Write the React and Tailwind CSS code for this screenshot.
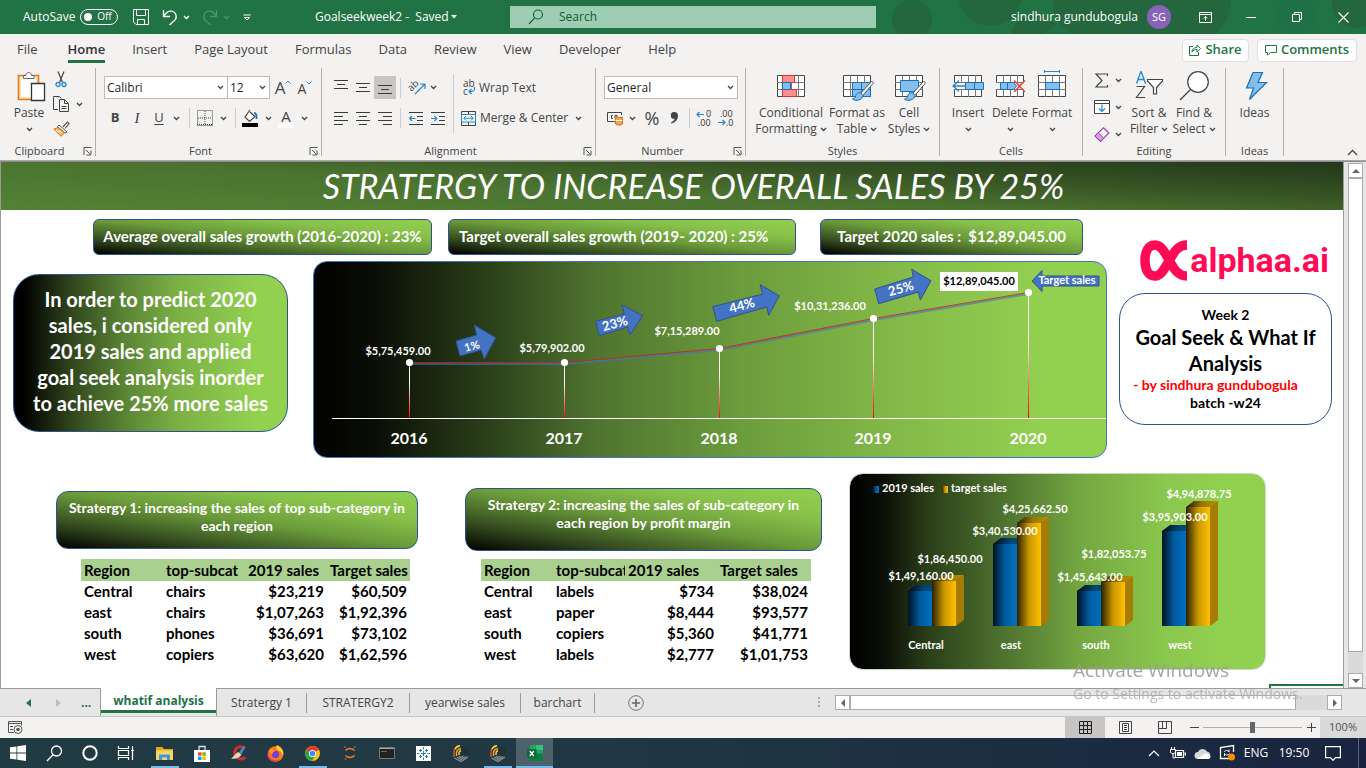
import React from "react";

const UI = "font-['Open_Sans',sans-serif]";
const DOC = "font-['Lato',sans-serif]";

/* ---------- shared pieces ---------- */

function Svg({ w, h, children, className = "" }) {
  return (
    <svg width={w} height={h} viewBox={`0 0 ${w} ${h}`} fill="none" className={`block shrink-0 overflow-visible ${className}`} aria-hidden="true">
      {children}
    </svg>
  );
}

function Chevron({ className = "text-[#444]" }) {
  return (
    <Svg w={7} h={5} className={className}>
      <path d="M1 1l2.5 2.5L6 1" stroke="currentColor" strokeWidth="1.3" />
    </Svg>
  );
}

function Btn({ label, className = "", children }) {
  return (
    <button type="button" aria-label={label} className={`flex shrink-0 items-center justify-center ${className}`}>
      {children}
    </button>
  );
}

function Drop({ label, className = "" }) {
  return (
    <Btn label={label} className={`h-5 w-3 ${className}`}>
      <Chevron />
    </Btn>
  );
}

function Divider({ className = "" }) {
  return <span className={`w-px shrink-0 bg-[#cfcdcb] ${className}`} />;
}

function Combo({ label, options, className }) {
  return (
    <div className={`relative flex h-[23px] items-center border border-[#bebbb8] bg-white ${className}`}>
      <select aria-label={label} className="h-[18px] w-full appearance-none bg-transparent pl-[2px] text-xs leading-[18px] text-[#262626] outline-none">
        {options.map((o) => (
          <option key={o}>{o}</option>
        ))}
      </select>
      <span className="pointer-events-none absolute top-2 right-[3px]">
        <Chevron />
      </span>
    </div>
  );
}

function Group({ name, launcher, className, inner = "", children }) {
  return (
    <section aria-label={name} className="flex shrink-0">
      <div className={`flex flex-col ${className}`}>
        <div className={`h-[77px] ${inner}`}>{children}</div>
        <div className="flex h-[18px] items-center">
          <span className="flex-1 text-center text-[11px] text-[#444]">{name}</span>
          {launcher && (
            <Btn label={`${name} settings`} className="h-4 w-4">
              <Svg w={9} h={9}>
                <path d="M1 8V.5h7.500M3 3l4 4M8 3.500V8H3.500" stroke="#555" />
              </Svg>
            </Btn>
          )}
        </div>
      </div>
      <span className="mt-[2px] h-[88px] w-px bg-[#b3b0ad]" />
    </section>
  );
}

/* ---------- title bar ---------- */

function TitleBar() {
  return (
    <header className="relative flex h-[34px] shrink-0 items-center overflow-hidden bg-[#217346] text-xs text-white">
      <svg className="absolute top-0 right-0 h-[34px] w-[480px]" viewBox="0 0 480 34" aria-hidden="true">
        <g fill="#24673f">
          <circle cx="26" cy="19" r="20" />
          <circle cx="104" cy="-6" r="32" />
          <circle cx="150" cy="40" r="26" />
          <circle cx="205" cy="4" r="38" />
          <circle cx="262" cy="24" r="46" />
          <circle cx="305" cy="2" r="40" />
          <circle cx="470" cy="4" r="24" />
        </g>
        <g fill="#1f7044">
          <circle cx="172" cy="42" r="16" />
          <circle cx="410" cy="14" r="20" />
        </g>
      </svg>
      <div className="relative flex w-[510px] shrink-0 items-center pl-[23px]">
        <span className="w-[57px]">AutoSave</span>
        <button type="button" role="switch" aria-checked="false" aria-label="AutoSave" className="flex h-4 w-[38px] items-center rounded-full border border-white pl-[3px]">
          <span className="h-2 w-2 rounded-full bg-white" />
          <span className="flex-1 text-center text-[10px]">Off</span>
        </button>
        <Btn label="Save" className="ml-[15px]">
          <Svg w={16} h={17}>
            <path d="M.5.500h15v15H3l-2.500-2.500zM3.500.500v6h9v-6M4.500 15.500v-5h7v5" stroke="#fff" />
          </Svg>
        </Btn>
        <Btn label="Undo" className="ml-[13px]">
          <Svg w={16} h={17}>
            <path d="M1.500 1v6.500H8M1.800 7.200C4 3.500 7 1.500 10 2.200c4 1 5.500 5.500 3 8.800L7.500 16" stroke="#fff" strokeWidth="1.3" />
          </Svg>
        </Btn>
        <Btn label="Undo history" className="ml-[2px] h-5 w-3">
          <Chevron className="text-white" />
        </Btn>
        <Btn label="Redo" className="ml-[10px]">
          <Svg w={16} h={17}>
            <path d="M14.500 1v6.500H8M14.200 7.200C12 3.500 9 1.500 6 2.200c-4 1-5.500 5.500-3 8.800L8.500 16" stroke="#51936f" strokeWidth="1.3" />
          </Svg>
        </Btn>
        <Btn label="Redo history" className="ml-[2px] h-5 w-3">
          <Chevron className="text-[#51936f]" />
        </Btn>
        <Btn label="Customize toolbar" className="ml-[9px] h-5 w-3">
          <Svg w={8} h={7}>
            <path d="M.5 1h7M1.500 3.500L4 6l2.500-2.500z" stroke="#fff" />
          </Svg>
        </Btn>
        <h1 className="ml-[62px] whitespace-nowrap">Goalseekweek2 - &nbsp;Saved</h1>
        <Btn label="File details" className="-ml-px w-3">
          <Svg w={6} h={4}>
            <path d="M0 0h6L3 3.500z" fill="#fff" />
          </Svg>
        </Btn>
      </div>
      <label className="relative flex h-[22px] w-[366px] items-center bg-[#9fcdb3] pl-[18px]">
        <Svg w={16} h={16}>
          <circle cx="10" cy="5.500" r="4.500" stroke="#0f5b30" strokeWidth="1.1" />
          <path d="M6.800 8.800L1 15" stroke="#0f5b30" strokeWidth="1.1" />
        </Svg>
        <input type="text" aria-label="Search" placeholder="Search" className="ml-[15px] w-full bg-transparent outline-none placeholder:text-[#0f5b30]" />
      </label>
      <div className="relative ml-auto flex items-center">
        <span>sindhura gundubogula</span>
        <Btn label="Account" className="ml-[9px] h-6 w-6 rounded-full bg-[#8764b8] text-[11px]">SG</Btn>
        <Btn label="Ribbon display options" className="ml-[11px] h-[34px] w-[46px]">
          <Svg w={13} h={11}>
            <path d="M.5.500h12v10H.500zM.5 2.500h12M6.500 9V4.500M4.500 6.300l2-2 2 2" stroke="#fff" />
          </Svg>
        </Btn>
        <Btn label="Minimize" className="h-[34px] w-[46px]">
          <Svg w={10} h={1}>
            <path d="M0 .5h10" stroke="#fff" />
          </Svg>
        </Btn>
        <Btn label="Restore" className="h-[34px] w-[46px]">
          <Svg w={10} h={10}>
            <path d="M.5 2.500h7v7h-7zM2.500 2.500v-2h7v7h-2" stroke="#fff" />
          </Svg>
        </Btn>
        <Btn label="Close" className="h-[34px] w-[46px]">
          <Svg w={11} h={11}>
            <path d="M.5.500l10 10M10.500.500l-10 10" stroke="#fff" strokeWidth="1.1" />
          </Svg>
        </Btn>
      </div>
    </header>
  );
}

/* ---------- ribbon ---------- */

const MENU = ["File", "Home", "Insert", "Page Layout", "Formulas", "Data", "Review", "View", "Developer", "Help"];

function MenuBar() {
  return (
    <nav className="flex h-8 shrink-0 items-center pl-[17px] text-[13px] text-[#444]">
      <div className="flex flex-1 gap-[27px]">
        {MENU.map((m) =>
          m === "Home" ? (
            <button key={m} type="button" className="ml-[3px] border-b-[3px] border-[#217346] pt-[3px] pb-px font-semibold text-[#333]">{m}</button>
          ) : (
            <button key={m} type="button">{m}</button>
          )
        )}
      </div>
      <Btn label="Share" className="h-[23px] w-[67px] gap-1 rounded-sm border border-[#e1dfdd] bg-white font-semibold text-[#217346]">
        <Svg w={12} h={12}>
          <path d="M4 2.500H.500v9h9V8M3 8c0-3 2-4.500 5-4.500V1l3.500 3.500L8 8V5.500C6 5.500 4 6 3 8z" stroke="#217346" />
        </Svg>
        Share
      </Btn>
      <Btn label="Comments" className="mr-[9px] ml-2 h-[23px] w-[100px] gap-1 rounded-sm border border-[#e1dfdd] bg-white font-semibold text-[#217346]">
        <Svg w={12} h={11}>
          <path d="M.5.500h11v7H5.500l-3 2.500V7.500h-2z" stroke="#217346" />
        </Svg>
        Comments
      </Btn>
    </nav>
  );
}

function Lines({ rows }) {
  return (
    <Svg w={14} h={15}>
      {rows.map(([x, w, y]) => (
        <path key={y} d={`M${x} ${y + 0.5}h${w}`} stroke="#3b3b3b" />
      ))}
    </Svg>
  );
}

function GridIcon({ children }) {
  return (
    <Svg w={32} h={32}>
      <path d="M2.500 5.500h27v21h-27z" fill="#fff" stroke="#444" />
      <path d="M2 12.500h28M2 19.500h28M9.500 5v22M16.500 5v22M23.500 5v22" stroke="#777" />
      {children}
    </Svg>
  );
}

function Brush() {
  return (
    <>
      <path d="M30.500 11.500L19 24l2.500 2L32 13.500c.5-1-.500-2.500-1.500-2z" fill="#fff" stroke="#555" />
      <path d="M20 23c-3-1-5 1-5.500 3.500-.4 1.600-1.500 2.500-3 2.500 3 2.500 10 1.500 10.500-3.500z" fill="#83beec" stroke="#1a6fb8" />
    </>
  );
}

function Big({ lines, arrow, className, children }) {
  return (
    <button type="button" className={`flex shrink-0 flex-col items-center pt-1 text-xs leading-4 text-[#444] ${className}`}>
      <span className="mb-[3px]">{children}</span>
      <span className="whitespace-nowrap">{lines[0]}</span>
      <span className="flex h-4 items-center gap-[3px] whitespace-nowrap">
        {lines[1]}
        {arrow && <Chevron />}
      </span>
    </button>
  );
}

function ClipboardGroup() {
  return (
    <Group name="Clipboard" launcher className="w-[95px]">
      <div className="flex">
        <Big lines={["Paste"]} arrow className="ml-[9px] w-10">
          <Svg w={32} h={32}>
            <path d="M5.500 5.500h20v24h-20z" fill="#fbe3b6" stroke="#e07b18" strokeWidth="1.600" />
            <path d="M8 8h15v19H8z" fill="#fff" />
            <path d="M10.500 8.500v-3H13c0-4 5.500-4 5.500 0H21v3z" fill="#fff" stroke="#666" />
            <path d="M18.500 13.500h13v17h-13z" fill="#fff" stroke="#333" strokeWidth="1.300" />
          </Svg>
        </Big>
        <div className="flex flex-col gap-[7px] pt-[5px] pl-[3px]">
          <Btn label="Cut" className="h-4 w-[18px]">
            <Svg w={12} h={17}>
              <path d="M3 .5l4.500 11M9 .5L4.500 11.500" stroke="#444" strokeWidth="1.200" />
              <circle cx="3" cy="13.500" r="2" stroke="#2287cf" strokeWidth="1.300" />
              <circle cx="9" cy="13.500" r="2" stroke="#2287cf" strokeWidth="1.300" />
            </Svg>
          </Btn>
          <div className="flex items-center">
            <Btn label="Copy" className="h-4 w-[18px]">
              <Svg w={16} h={16}>
                <path d="M5 13.500H.500V.500h6l2 2M6.500 3.500h5l4 4v8h-9zM11.500 3.500v4h4M8.500 10.500h5M8.500 12.500h5" stroke="#444" />
              </Svg>
            </Btn>
            <Drop label="Copy options" className="ml-[3px] h-4" />
          </div>
          <Btn label="Format painter" className="h-4 w-[18px]">
            <Svg w={17} h={16}>
              <path d="M10 6l4.500-5 1.500 1.500L12 7.500" fill="#fff" stroke="#555" strokeWidth="1.200" />
              <path d="M6 4l8 7-2 1-7.500-6.500z" fill="#fff" stroke="#555" />
              <path d="M5 6.500L.8 8 8 15.300l3.500-3.500z" fill="#f9b263" stroke="#d9720f" />
              <path d="M3 9.500l6 2" stroke="#fff" />
            </Svg>
          </Btn>
        </div>
      </div>
    </Group>
  );
}

function FontGroup() {
  return (
    <Group name="Font" launcher className="w-[225px]" inner="pl-2 pt-[10px]">
      <div className="flex h-[23px] items-center">
        <Combo label="Font" options={["Calibri"]} className="w-[124px]" />
        <Combo label="Font size" options={["12"]} className="-ml-px w-[43px]" />
        <Btn label="Increase font size" className="ml-[3px] h-5 w-5 text-[17px] leading-5 text-[#444]">
          A<Svg w={6} h={4} className="mb-3"><path d="M.5 3.500L3 1l2.500 2.500" stroke="#2287cf" /></Svg>
        </Btn>
        <Btn label="Decrease font size" className="ml-[2px] h-5 w-5 pt-[2px] text-sm leading-5 text-[#444]">
          A<Svg w={6} h={4} className="mb-3"><path d="M.5.500L3 3 5.500.500" stroke="#2287cf" /></Svg>
        </Btn>
      </div>
      <div className="mt-2 flex h-[22px] items-center text-[13px] text-[#444]">
        <Btn label="Bold" className="w-[22px] font-bold">B</Btn>
        <Btn label="Italic" className="w-[22px] font-['Liberation_Serif',serif] text-[15px] italic">I</Btn>
        <Btn label="Underline" className="w-[22px] underline underline-offset-2">U</Btn>
        <Drop label="Underline options" />
        <Divider className="mx-[7px] h-5" />
        <Btn label="Borders">
          <Svg w={16} h={16}>
            <path d="M.5.500h15v15H.500zM8 1v14M1 8h14" stroke="#444" strokeDasharray="1 1" />
            <path d="M0 14.500h16" stroke="#333" strokeWidth="1" strokeDasharray="1 1" />
          </Svg>
        </Btn>
        <Drop label="Border options" className="ml-1" />
        <Divider className="mx-[6px] h-5" />
        <Btn label="Fill color">
          <Svg w={16} h={18}>
            <path d="M8 1L3 8l4.500 4.500L13 7.500 8 3" fill="#fff" stroke="#444" strokeWidth="1.200" />
            <path d="M12 4c2 0 3 2 2.500 6" stroke="#1a6fb8" strokeWidth="1.800" />
            <path d="M0 14h16v4H0z" fill="#000" />
          </Svg>
        </Btn>
        <Drop label="Fill options" className="ml-1" />
        <Btn label="Font color" className="ml-1 w-4 flex-col text-[15px] leading-4">
          A<span className="h-1 w-4 bg-white" />
        </Btn>
        <Drop label="Font color options" className="ml-1" />
      </div>
    </Group>
  );
}

const L = [[0, 14, 1], [0, 9, 5], [0, 14, 9], [0, 9, 13]];
const C = [[0, 14, 1], [3, 8, 5], [0, 14, 9], [3, 8, 13]];
const R = [[0, 14, 1], [5, 9, 5], [0, 14, 9], [5, 9, 13]];

function AlignmentGroup() {
  return (
    <Group name="Alignment" launcher className="w-[273px]" inner="pl-2">
      <div className="flex">
        <div className="pt-[10px]">
          <div className="flex h-[23px] items-center">
            <Btn label="Top align" className="h-[23px] w-[22px]"><Lines rows={[[0, 14, 0], [3, 8, 4], [0, 14, 8]]} /></Btn>
            <Btn label="Middle align" className="h-[23px] w-[22px]"><Lines rows={[[0, 14, 3], [3, 8, 7], [0, 14, 11]]} /></Btn>
            <Btn label="Bottom align" className="h-[23px] w-[22px] bg-[#c8c6c4]"><Lines rows={[[0, 14, 5], [3, 8, 9], [0, 14, 13]]} /></Btn>
            <Divider className="mx-1 h-5" />
            <Btn label="Orientation" className="ml-1">
              <Svg w={18} h={17}>
                <text x="0" y="10" fontSize="10" fill="#444" transform="rotate(-42 5 9)">ab</text>
                <path d="M6 15L15.500 5.500M11 5h5v5" stroke="#2287cf" strokeWidth="1.200" />
              </Svg>
            </Btn>
            <Drop label="Orientation options" />
          </div>
          <div className="mt-2 flex h-[22px] items-center">
            <Btn label="Align left" className="w-[22px]"><Lines rows={L} /></Btn>
            <Btn label="Center" className="w-[22px]"><Lines rows={C} /></Btn>
            <Btn label="Align right" className="w-[22px]"><Lines rows={R} /></Btn>
            <Divider className="mx-1 h-5" />
            <Btn label="Decrease indent" className="w-[22px]">
              <Svg w={14} h={15}>
                <path d="M0 1.500h14M8 5.500h6M8 9.500h6M0 13.500h14" stroke="#3b3b3b" />
                <path d="M6.500 7.500h-6M3 5L.700 7.500 3 10" stroke="#2287cf" strokeWidth="1.200" />
              </Svg>
            </Btn>
            <Btn label="Increase indent" className="w-[22px]">
              <Svg w={14} h={15}>
                <path d="M0 1.500h14M8 5.500h6M8 9.500h6M0 13.500h14" stroke="#3b3b3b" />
                <path d="M0 7.500h6M3.500 5l2.300 2.500L3.500 10" stroke="#2287cf" strokeWidth="1.200" />
              </Svg>
            </Btn>
          </div>
        </div>
        <Divider className="mt-2 mr-[7px] ml-[4px] h-[59px]" />
        <div className="pt-[10px] text-xs text-[#444]">
          <Btn label="Wrap Text" className="h-[23px] gap-[2px]">
            <Svg w={16} h={17}>
              <text x="2" y="8" fontSize="10" fill="#444">ab</text>
              <text x="2" y="16" fontSize="10" fill="#444">c</text>
              <path d="M13.500 8v2c0 2-1 2.500-5 2.500M10.500 10l-2.500 2.500 2.500 2.500" stroke="#2287cf" strokeWidth="1.200" />
            </Svg>
            Wrap Text
          </Btn>
          <div className="mt-2 flex h-[22px] items-center">
            <Btn label="Merge & Center" className="h-[22px] gap-1 whitespace-nowrap">
              <Svg w={15} h={15}>
                <path d="M.5.500h14v14H.500zM7.500.500v3M7.500 11v3.500" stroke="#444" />
                <path d="M.5 3.500h14v7.500H.500z" fill="#fff" stroke="#2287cf" />
                <path d="M3 7.200h9M5 5L2.800 7.200 5 9.500M10 5l2.200 2.200L10 9.500" stroke="#2287cf" />
              </Svg>
              Merge &amp; Center
            </Btn>
            <Drop label="Merge options" className="ml-1" />
          </div>
        </div>
      </div>
    </Group>
  );
}

function DecimalIcon({ top, bottom, d, tx, bx }) {
  return (
    <Svg w={17} h={17}>
      <text x={tx} y="7" fontSize="9" fill="#333">{top}</text>
      <text x={bx} y="16" fontSize="9" fill="#333">{bottom}</text>
      <path d={d} stroke="#2287cf" strokeWidth="1.200" />
    </Svg>
  );
}

function NumberGroup() {
  return (
    <Group name="Number" launcher className="w-[149px]" inner="pl-2 pt-[10px]">
      <Combo label="Number format" options={["General"]} className="w-[134px]" />
      <div className="mt-2 flex h-[22px] items-center pl-[3px] text-[#444]">
        <Btn label="Accounting format">
          <Svg w={17} h={15}>
            <path d="M14.500 4V1.500H.500v9H8M6 4.500H4.500v3H6M8 7.500v-3h2v3" stroke="#444" />
            <path d="M8.500 6.500h7v6.500c-2 1.500-5 1.500-7 0z" fill="#f7a54a" stroke="#d9720f" />
            <path d="M8.500 9.500h7" stroke="#fff" />
          </Svg>
        </Btn>
        <Drop label="Accounting options" className="ml-[2px]" />
        <Btn label="Percent" className="ml-[6px] w-4 text-lg leading-[22px]">%</Btn>
        <Btn label="Comma" className="ml-[6px] w-4">
          <Svg w={9} h={12}>
            <path d="M4 0a3.500 3.500 0 014 3.500C8 7.500 5.500 10.500 1.500 11.500L1 10.500C3.500 9.500 4.500 8 4.500 6.800A3.400 3.400 0 114 0z" fill="#444" />
          </Svg>
        </Btn>
        <Divider className="mr-[6px] ml-[7px] h-5" />
        <Btn label="Increase decimal"><DecimalIcon top="0" bottom=".00" tx={10} bx={2} d="M8 4.500H1M3.500 2L1 4.500 3.500 7" /></Btn>
        <Btn label="Decrease decimal" className="ml-[5px]"><DecimalIcon top=".00" bottom=".0" tx={2} bx={8} d="M0 12.500h7M4.500 10L7 12.500 4.500 15" /></Btn>
      </div>
    </Group>
  );
}

function StylesGroup() {
  return (
    <Group name="Styles" className="w-[193px]" inner="pl-2">
      <div className="flex">
        <Big lines={["Conditional", "Formatting"]} arrow className="w-[74px]">
          <GridIcon>
            <path d="M7.500 5.500h12v7h-12zM7.500 19.500h14v7h-14z" fill="#ff8f8f" stroke="#d33" />
            <path d="M7.500 12.500h8v7h-8z" fill="#83beec" stroke="#1a6fb8" />
          </GridIcon>
        </Big>
        <Big lines={["Format as", "Table"]} arrow className="w-[58px]">
          <GridIcon>
            <path d="M11.500 12.500h18v14h-18z" fill="#83beec" stroke="#1a6fb8" />
            <path d="M11 19.500h18M20.500 13v13" stroke="#1a6fb8" />
            <Brush />
          </GridIcon>
        </Big>
        <Big lines={["Cell", "Styles"]} arrow className="w-[46px]">
          <GridIcon>
            <path d="M7.500 10.500h18v11h-18z" fill="#83beec" stroke="#1a6fb8" />
            <Brush />
          </GridIcon>
        </Big>
      </div>
    </Group>
  );
}

function CellsGroup() {
  return (
    <Group name="Cells" className="w-[142px]" inner="pl-[7px]">
      <div className="flex">
        <Big lines={["Insert"]} arrow className="w-[42px]">
          <GridIcon>
            <path d="M1 13h20v6H1z" fill="#f3f2f1" />
            <path d="M13.500 12.500h18v7h-18zM22.500 12.500v7" fill="#83beec" stroke="#1a6fb8" />
            <path d="M14 16H1M7 10.500L1 16l6 5.500" stroke="#2287cf" strokeWidth="1.300" />
          </GridIcon>
        </Big>
        <Big lines={["Delete"]} arrow className="w-[42px]">
          <GridIcon>
            <path d="M1 13h30v6H1z" fill="#f3f2f1" />
            <path d="M6.500 12.500h13l3 3.500-3 3.500h-13zM13.500 12.500v7" fill="#83beec" stroke="#1a6fb8" />
            <path d="M20 10.500l11 11.500M31 10.500L20 22" stroke="#e8473f" strokeWidth="1.500" />
          </GridIcon>
        </Big>
        <Big lines={["Format"]} arrow className="w-[42px]">
          <GridIcon>
            <path d="M9.500 12.500h14v7h-14z" fill="#83beec" stroke="#1a6fb8" />
            <path d="M8.500 0v3M23.500 0v3M8.500 1.500h15" stroke="#2287cf" />
          </GridIcon>
        </Big>
      </div>
    </Group>
  );
}

function EditingGroup() {
  return (
    <Group name="Editing" className="w-[142px]" inner="pl-[9px]">
      <div className="flex">
        <div className="flex w-9 flex-col gap-[7px] pt-1">
          <div className="flex items-center">
            <Btn label="AutoSum" className="h-4 w-5">
              <Svg w={14} h={15}>
                <path d="M12.500 3V1H1l6 6.500L1 14h11.500v-2" stroke="#444" strokeWidth="1.200" />
              </Svg>
            </Btn>
            <Drop label="AutoSum options" className="h-4" />
          </div>
          <div className="flex items-center">
            <Btn label="Fill" className="h-4 w-5">
              <Svg w={16} h={14}>
                <path d="M.5.500h15v13H.500zM.5 3.500h15" fill="#fff" stroke="#444" />
                <path d="M8 4.500v7M5 8.500l3 3 3-3" stroke="#2287cf" strokeWidth="1.200" />
              </Svg>
            </Btn>
            <Drop label="Fill options" className="h-4" />
          </div>
          <div className="flex items-center">
            <Btn label="Clear" className="h-4 w-5">
              <Svg w={16} h={15}>
                <path d="M9.500.800L14.800 6 6.500 14.300 1 9z" fill="#fff" stroke="#a03fb0" strokeWidth="1.200" />
                <path d="M4.300 5.800L9.700 11l-3.200 3.300L1 9z" fill="#d9a0df" stroke="#a03fb0" />
              </Svg>
            </Btn>
            <Drop label="Clear options" className="h-4" />
          </div>
        </div>
        <Big lines={["Sort &", "Filter"]} arrow className="w-[42px]">
          <Svg w={32} h={32}>
            <path d="M3.500 13.500L7.700 2h.600l4.200 11.500M5 9.500h6" stroke="#2287cf" strokeWidth="1.300" />
            <path d="M3.500 16.500h8l-8 11h8.500" stroke="#444" strokeWidth="1.200" />
            <path d="M14.500 9.500h15v1.500l-6 6.500v6.500h-3v-6.500l-6-6.500z" fill="#fff" stroke="#444" strokeWidth="1.200" />
          </Svg>
        </Big>
        <Big lines={["Find &", "Select"]} arrow className="w-12">
          <Svg w={32} h={32}>
            <circle cx="20" cy="12" r="10.300" fill="#fff" stroke="#444" strokeWidth="1.200" />
            <path d="M12.500 19.500L2 30" stroke="#444" strokeWidth="1.300" />
          </Svg>
        </Big>
      </div>
    </Group>
  );
}

function Ribbon() {
  return (
    <div className="flex h-[95px] shrink-0 border-b border-[#aaa8a6] bg-[#f3f2f1]">
      <ClipboardGroup />
      <FontGroup />
      <AlignmentGroup />
      <NumberGroup />
      <StylesGroup />
      <CellsGroup />
      <EditingGroup />
      <Group name="Ideas" className="w-[57px]">
        <Big lines={["Ideas"]} className="w-full">
          <Svg w={32} h={32}>
            <path d="M14 2.500h9.500L19 12.500h8.500L10.500 29.500l4-11.500H7.500z" fill="#83beec" stroke="#1a6fb8" strokeWidth="1.200" />
          </Svg>
        </Big>
      </Group>
      <Btn label="Collapse ribbon" className="mt-auto mr-2 mb-1 ml-auto">
        <Svg w={11} h={7}>
          <path d="M1 6l4.500-4.500L10 6" stroke="#444" strokeWidth="1.300" />
        </Svg>
      </Btn>
    </div>
  );
}

/* ---------- worksheet content ---------- */

const CHIP = "bg-[linear-gradient(to_top_right,#000_0%,#33491f_22%,#6a9a3a_50%,#88c14a_75%,#92d050_100%)]";

function Chip({ className, children }) {
  return (
    <div className={`flex h-9 shrink-0 items-center rounded-md border border-[#2f528f] pb-px text-[15px] font-bold whitespace-pre text-white ${CHIP} ${className}`}>
      {children}
    </div>
  );
}

const POINTS = [
  { x: 409, y: 362, year: "2016", value: "$5,75,459.00", lx: 398, ly: 355 },
  { x: 564, y: 362, year: "2017", value: "$5,79,902.00", lx: 552, ly: 352 },
  { x: 719, y: 348, year: "2018", value: "$7,15,289.00", lx: 687, ly: 335 },
  { x: 873, y: 318, year: "2019", value: "$10,31,236.00", lx: 830, ly: 310 },
  { x: 1028, y: 292, year: "2020", value: "$12,89,045.00", lx: 979, ly: 285 },
];

const ARROWS = [
  { label: "1%", x: 472, y: 350, size: 11, pts: "456,341 476.700,335 474.300,325 495.700,337.700 484.300,359 481,350 460,356" },
  { label: "23%", x: 615, y: 328, size: 13, pts: "595.700,321.300 624.300,314 622,305 642.700,315.700 630,335 627.700,327 599.300,335.700" },
  { label: "44%", x: 742, y: 310, size: 13, pts: "712.700,306.700 762.700,294 760,284.700 779.300,295.700 768.700,315.300 766.700,307 716.700,321.300" },
  { label: "25%", x: 901, y: 293, size: 13, pts: "874.700,289 913.300,277 911.700,269.300 931,280.700 920.300,300 918.300,292 878.700,303.700" },
];

function LineChart() {
  const path = POINTS.map((p) => `${p.x},${p.y}`).join(" ");
  return (
    <div className="h-[197px] w-[794px] shrink-0 overflow-hidden rounded-[14px] border border-[#4472c4] bg-[linear-gradient(to_right,#000_0%,#0b0f07_8%,#2b3f19_22%,#507530_36%,#6c9c3c_54%,#84ba49_74%,#92d050_92%)]">
      <svg viewBox="314 262 792 195" className="block h-full w-full" role="img" aria-label="Sales by year">
        <defs>
          <linearGradient id="drop" x1="0" y1="0" x2="0" y2="1">
            <stop offset="0" stopColor="#fff" />
            <stop offset=".35" stopColor="#fff" />
            <stop offset="1" stopColor="#f00" />
          </linearGradient>
        </defs>
        <polyline points={path} fill="none" stroke="#4472c4" strokeOpacity=".6" strokeWidth="1.800" transform="translate(0.5 2)" />
        <polyline points={path} fill="none" stroke="#d3200c" strokeOpacity=".8" strokeWidth="1.200" transform="translate(0.5 0.5)" />
        {POINTS.map((p) => (
          <g key={p.year}>
            <rect x={p.x} y={p.y} width="1" height={418 - p.y} fill="url(#drop)" />
            <circle cx={p.x + 0.5} cy={p.y + 0.5} r="3.600" fill="#fff" />
            <text x={p.x} y="444" textAnchor="middle" fontSize="16" fontWeight="700" fill="#fff">{p.year}</text>
          </g>
        ))}
        <path d="M332 418.500H1106" stroke="#fff" />
        <rect x="940" y="272" width="78" height="19" fill="#fff" />
        {POINTS.map((p) => (
          <text key={p.year} x={p.lx} y={p.ly} textAnchor="middle" fontSize="11" fontWeight="700" fill={p.year === "2020" ? "#000" : "#fff"}>{p.value}</text>
        ))}
        {ARROWS.map((a) => (
          <g key={a.label}>
            <polygon points={a.pts} fill="#4472c4" stroke="#2f528f" />
            <text x={a.x} y={a.y} textAnchor="middle" fontSize={a.size} fontWeight="700" fill="#fff" transform={`rotate(-15 ${a.x} ${a.y - 4})`}>{a.label}</text>
          </g>
        ))}
        <polygon points="1032,281 1042,270.500 1042,276 1099,276 1099,286 1042,286 1042,291.500" fill="#4472c4" stroke="#2f528f" />
        <text x="1067" y="284" textAnchor="middle" fontSize="11" fontWeight="700" fill="#fff">Target sales</text>
      </svg>
    </div>
  );
}

function Logo() {
  return (
    <div className="flex h-[42px] items-center gap-[2px] self-end pr-[3px] text-[#ff0a54]">
      <Svg w={48} h={41}>
        <path d="M47 5C38 5 34 12 29.500 20C25 28 21 36 15 36C8 36 5 29 5 20.500C5 12 8 5 15 5C21 5 25 12 29.500 21C34 29 38 36 47 36" stroke="currentColor" strokeWidth="9.500" />
      </Svg>
      <span className="font-['Roboto',sans-serif] text-[34px] leading-[36px] font-bold">alphaa.ai</span>
    </div>
  );
}

const BARS = [
  { name: "Central", x: 908, cx: 926, a: 591, b: 581, la: ["$1,49,160.00", 921, 580], lb: ["$1,86,450.00", 950, 563] },
  { name: "east", x: 993, cx: 1011, a: 544, b: 523, la: ["$3,40,530.00", 1005, 535], lb: ["$4,25,662.50", 1035, 513] },
  { name: "south", x: 1077, cx: 1096, a: 591, b: 582, la: ["$1,45,643.00", 1090, 581], lb: ["$1,82,053.75", 1114, 558] },
  { name: "west", x: 1162, cx: 1180, a: 531, b: 507, la: ["$3,95,903.00", 1175, 521], lb: ["$4,94,878.75", 1199, 498] },
];

function Column({ x, top, front, lid, side }) {
  const base = 626;
  return (
    <g>
      <rect x={x} y={top} width="24" height={base - top} fill={front} />
      <polygon points={`${x},${top} ${x + 8},${top - 6} ${x + 32},${top - 6} ${x + 24},${top}`} fill={lid} />
      <polygon points={`${x + 24},${top} ${x + 32},${top - 6} ${x + 32},${base - 6} ${x + 24},${base}`} fill={side} />
    </g>
  );
}

function Gradient({ id, stops }) {
  return (
    <linearGradient id={id}>
      {stops.map((c, i) => (
        <stop key={c} offset={i / (stops.length - 1)} stopColor={c} />
      ))}
    </linearGradient>
  );
}

function BarChart() {
  return (
    <div className="mt-[15px] h-[197px] w-[417px] shrink-0 overflow-hidden rounded-[14px] border border-[#d0d4cb] bg-[linear-gradient(to_right,#000_0%,#0b0f07_8%,#2b3f19_19%,#507530_38%,#75a841_56%,#8ac74d_76%,#92d050_90%)]">
      <svg viewBox="850 474 415 195" className="block h-full w-full" role="img" aria-label="2019 sales and target sales by region">
        <defs>
          <Gradient id="blueFront" stops={["#00121f", "#005a9e", "#0070c0"]} />
          <Gradient id="blueLid" stops={["#000810", "#00436f", "#005390"]} />
          <Gradient id="goldFront" stops={["#2b2000", "#c89600", "#ffc000"]} />
          <Gradient id="goldLid" stops={["#1f1700", "#9c7500", "#bf9000"]} />
        </defs>
        <rect x="873" y="486" width="6" height="7" fill="url(#blueFront)" />
        <text x="882" y="492" fontSize="11" fontWeight="700" fill="#fff">2019 sales</text>
        <rect x="942" y="486" width="6" height="7" fill="url(#goldFront)" />
        <text x="951" y="492" fontSize="11" fontWeight="700" fill="#fff">target sales</text>
        {BARS.map((b) => (
          <g key={b.name}>
            <Column x={b.x} top={b.a} front="url(#blueFront)" lid="url(#blueLid)" side="#00406e" />
            <Column x={b.x + 24} top={b.b} front="url(#goldFront)" lid="url(#goldLid)" side="#a67c00" />
            <text x={b.cx} y="649" textAnchor="middle" fontSize="11" fontWeight="700" fill="#fff">{b.name}</text>
          </g>
        ))}
        {BARS.flatMap((b) => [b.la, b.lb]).map(([t, x, y]) => (
          <text key={t} x={x} y={y} textAnchor="middle" fontSize="11" fontWeight="700" fill="#fff">{t}</text>
        ))}
      </svg>
    </div>
  );
}

function SalesTable({ label, rows, cols, className }) {
  return (
    <table aria-label={label} className={`table-fixed text-[15px] leading-[21px] font-bold whitespace-nowrap text-black ${className}`}>
      <colgroup>
        {cols.map((c, i) => (
          <col key={i} className={c} />
        ))}
      </colgroup>
      <thead>
        <tr className="h-[22px] bg-[#a9d08e] text-left">
          {["Region", "top-subcat", "2019 sales", "Target sales"].map((h) => (
            <th key={h} className="overflow-hidden p-0 pl-[3px] font-bold">{h}</th>
          ))}
        </tr>
      </thead>
      <tbody>
        {rows.map((r) => (
          <tr key={r[0]} className="h-[21px]">
            <td className="p-0 pl-[3px]">{r[0]}</td>
            <td className="p-0 pl-[3px]">{r[1]}</td>
            <td className="p-0 pr-[3px] text-right">{r[2]}</td>
            <td className="p-0 pr-[3px] text-right">{r[3]}</td>
          </tr>
        ))}
      </tbody>
    </table>
  );
}

function Strategy({ className, children }) {
  return (
    <h3 className={`flex justify-center rounded-xl border border-[#2f528f] px-3 pt-[7px] text-center text-sm leading-[18px] font-bold text-white ${CHIP} ${className}`}>
      {children}
    </h3>
  );
}

const TABLE1 = [
  ["Central", "chairs", "$23,219", "$60,509"],
  ["east", "chairs", "$1,07,263", "$1,92,396"],
  ["south", "phones", "$36,691", "$73,102"],
  ["west", "copiers", "$63,620", "$1,62,596"],
];
const TABLE2 = [
  ["Central", "labels", "$734", "$38,024"],
  ["east", "paper", "$8,444", "$93,577"],
  ["south", "copiers", "$5,360", "$41,771"],
  ["west", "labels", "$2,777", "$1,01,753"],
];

function Sheet() {
  return (
    <main className={`relative min-w-0 flex-1 overflow-hidden border-r border-l border-[#9b9b9b] bg-white ${DOC}`}>
      <h2 className="flex h-12 items-center justify-center bg-[linear-gradient(183deg,#22361a,#375424_30%,#4a7330_55%,#548235)] pb-[2px] pl-[43px] text-[34px] whitespace-nowrap text-white italic">
        STRATERGY TO INCREASE OVERALL SALES BY 25%
      </h2>
      <div className="flex gap-3 pl-3">
        <div>
          <div className="flex pt-[9px] pl-20">
            <Chip className="w-[339px] justify-center">Average overall sales growth (2016-2020) : 23%</Chip>
            <Chip className="ml-4 w-[348px] pl-[10px]">Target overall sales growth (2019- 2020) : 25%</Chip>
            <Chip className="ml-6 w-[263px] justify-center">{"Target 2020 sales :  $12,89,045.00"}</Chip>
          </div>
          <div className="flex items-start gap-[25px] pt-[6px]">
            <p className="mt-[13px] flex h-[158px] w-[275px] shrink-0 items-center justify-center rounded-[26px] border border-[#2f528f] bg-[linear-gradient(to_right,#000_3%,#33491f_22%,#598334_40%,#7bb045_60%,#92d050_88%)] pb-1 text-center text-xl leading-[26px] font-bold text-white">
              In order to predict 2020<br />sales, i considered only<br />2019 sales and applied<br />goal seek analysis inorder<br />to achieve 25% more sales
            </p>
            <LineChart />
          </div>
        </div>
        <div className="flex w-[213px] shrink-0 flex-col items-center pt-[29px]">
          <Logo />
          <div className="mt-3 w-full rounded-[26px] border border-[#2f528f] pt-3 pb-3 text-center text-sm leading-[18px] font-bold text-black">
            <p>Week 2</p>
            <p className="text-xl leading-[26px]">Goal Seek &amp; What If<br />Analysis</p>
            <p className="pr-5 text-[#f00]">- by sindhura gundubogula</p>
            <p>batch -w24</p>
          </div>
        </div>
      </div>
      <div className="flex items-start pl-[55px]">
        <section className="w-[362px] shrink-0 pt-[33px]">
          <Strategy className="h-[58px]">Stratergy 1: increasing the sales of top sub-category in<br />each region</Strategy>
          <SalesTable label="Stratergy 1 sales" rows={TABLE1} cols={["w-[82px]", "w-[82px]", "w-[82px]", "w-[83px]"]} className="mt-[10px] ml-[25px] w-[329px]" />
        </section>
        <section className="ml-[47px] w-[357px] shrink-0 pt-[30px]">
          <Strategy className="h-[63px]">Stratergy 2: increasing the sales of sub-category in<br />each region by profit margin</Strategy>
          <SalesTable label="Stratergy 2 sales" rows={TABLE2} cols={["w-[72px]", "w-[72px]", "w-[92px]", "w-[94px]"]} className="mt-2 ml-4 w-[330px]" />
        </section>
        <div className="w-[27px] shrink-0" />
        <BarChart />
      </div>
      <div className="absolute right-0 bottom-0 h-1 w-[74px] border-t-2 border-l-2 border-[#217346]" />
    </main>
  );
}

function ScrollButton({ label, d, className }) {
  return (
    <Btn label={label} className={`h-[15px] w-[15px] border border-[#ababab] bg-white ${className || ""}`}>
      <Svg w={8} h={8}>
        <path d={d} fill="#666" />
      </Svg>
    </Btn>
  );
}

function VerticalScroll() {
  return (
    <div className="flex w-[22px] shrink-0 flex-col items-end bg-[#e6e6e6] pt-px pr-[3px]">
      <ScrollButton label="Scroll up" d="M0 6l4-4 4 4z" />
      <div className="flex w-[15px] flex-1 flex-col bg-[#dadada]">
        <div className="mb-[21px] flex-1 border border-[#ababab] bg-white" />
      </div>
      <ScrollButton label="Scroll down" d="M0 2l4 4 4-4z" />
    </div>
  );
}

/* ---------- sheet tabs and status bar ---------- */

const TABS = [
  ["Stratergy 1", "w-[90px]"],
  ["STRATERGY2", "w-[103px]"],
  ["yearwise sales", "w-[111px]"],
  ["barchart", "w-[74px]"],
];

function SheetTabs() {
  return (
    <div className="flex h-7 shrink-0 bg-[#e6e6e6] text-xs text-[#444]">
      <div className="flex w-[101px] items-center border-t border-r border-[#9b9b9b] pl-[26px]">
        <Btn label="Previous sheet"><Svg w={5} h={8}><path d="M5 0v8L0 4z" fill="#217346" /></Svg></Btn>
        <Btn label="Next sheet" className="ml-[25px]"><Svg w={5} h={8}><path d="M0 0v8l5-4z" fill="#bdbdbd" /></Svg></Btn>
        <Btn label="More sheets" className="ml-5 font-bold text-[#217346]">...</Btn>
      </div>
      <button type="button" className="h-[25px] w-[115px] shrink-0 border-b-[3px] border-[#217346] bg-white pt-1 font-bold text-[#217346]">whatif analysis</button>
      <div className="flex min-w-0 flex-1 items-center border-t border-l border-[#9b9b9b]">
        {TABS.map(([t, w]) => (
          <button key={t} type="button" className={`h-5 shrink-0 border-r border-[#9b9b9b] ${w}`}>{t}</button>
        ))}
        <Btn label="New sheet" className="ml-[33px]">
          <Svg w={16} h={16}>
            <circle cx="8" cy="8" r="7.300" stroke="#777" />
            <path d="M8 4v8M4 8h8" stroke="#666" strokeWidth="1.600" />
          </Svg>
        </Btn>
        <Svg w={2} h={11} className="mr-[15px] ml-auto">
          <path d="M0 0h2v2H0zM0 4h2v2H0zM0 8h2v2H0z" fill="#a8a8a8" />
        </Svg>
        <ScrollButton label="Scroll left" d="M6 0v8L2 4z" />
        <div className="h-[15px] w-[477px] bg-[#dadada] pr-[31px]">
          <div className="h-full border border-[#ababab] bg-white" />
        </div>
        <ScrollButton label="Scroll right" d="M2 0v8l4-4z" className="mr-[24px]" />
      </div>
    </div>
  );
}

function StatusBar() {
  return (
    <footer className="flex h-[22px] shrink-0 items-center border-t border-[#c6c6c6] bg-[#f3f2f1] text-[11px] text-[#555]">
      <Btn label="Record macro" className="ml-2">
        <Svg w={15} h={13}>
          <path d="M6 11.500H.500V.500h13v4M.5 2.500h13M2 5.500h3M2 8.500h3" stroke="#555" />
          <circle cx="10" cy="8.500" r="4" stroke="#555" />
          <circle cx="10" cy="8.500" r="1.800" fill="#555" />
        </Svg>
      </Btn>
      <Btn label="Normal view" className="ml-auto h-full w-10 bg-[#c8c6c4]">
        <Svg w={13} h={13}><path d="M.5.500h12v12H.500zM.5 4.500h12M.5 8.500h12M4.500.500v12M8.500.500v12" stroke="#222" /></Svg>
      </Btn>
      <Btn label="Page layout view" className="h-full w-10">
        <Svg w={13} h={13}><path d="M.5.500h12v12H.500zM3.500 2.500h6v8h-6zM5 4.500h3M5 6.500h3M5 8.500h3" stroke="#444" /></Svg>
      </Btn>
      <Btn label="Page break preview" className="h-full w-10">
        <Svg w={14} h={13}><path d="M.5.500h13v12H.500zM.5 7.500h8v-7M4.500.500v7" stroke="#444" /></Svg>
      </Btn>
      <Btn label="Zoom out" className="w-[18px]"><Svg w={9} h={9}><path d="M0 4.500h9" stroke="#444" /></Svg></Btn>
      <input
        type="range"
        aria-label="Zoom"
        min="0"
        max="100"
        defaultValue="50"
        className="h-3 w-[99px] appearance-none bg-[linear-gradient(#b0b0b0,#b0b0b0)] bg-[length:100%_1px] bg-center bg-no-repeat [&::-webkit-slider-thumb]:h-[11px] [&::-webkit-slider-thumb]:w-[5px] [&::-webkit-slider-thumb]:appearance-none [&::-webkit-slider-thumb]:bg-[#666]"
      />
      <Btn label="Zoom in" className="w-[18px]"><Svg w={9} h={9}><path d="M0 4.500h9M4.500 0v9" stroke="#444" /></Svg></Btn>
      <Btn label="Zoom level" className="h-full w-[46px] bg-[#dadada]">100%</Btn>
    </footer>
  );
}

/* ---------- taskbar ---------- */

function Task({ label, open, active, children }) {
  return (
    <button
      type="button"
      aria-label={label}
      className={`flex h-full w-[37px] shrink-0 items-center justify-center ${active ? "bg-[#4d626b]" : ""}`}
    >
      <span className={`flex h-full items-center justify-center ${active ? "w-full" : "w-7"} ${open ? "border-b-2 border-[#76b9ed] pt-[2px]" : ""}`}>{children}</span>
    </button>
  );
}

function ArcsIcon() {
  return (
    <Svg w={16} h={17}>
      <path d="M1 12V8c0-4 2-6 5-6.500" stroke="#e0572f" strokeWidth="1.400" />
      <path d="M3.500 11V8C3.500 5 5 4 8 3.500" stroke="#f5a623" strokeWidth="1.400" />
      <path d="M6 10V8c0-1.500.5-2 2-2.500" stroke="#f7d92f" strokeWidth="1.400" />
      <path d="M2 4c1-2 3-3 5-3.200" stroke="#f7d92f" strokeWidth="1.400" />
      <path d="M9.500 1.500v9M12 2v9M14.700 2.500v8" stroke="#2b2b2b" strokeWidth="1.300" />
      <path d="M1.500 13L8 16.500l7-4.500M4 12l4 2.500 5-3M6 11.300l2 1.200 2.500-1.500" stroke="#8b9296" strokeWidth="1.200" />
    </Svg>
  );
}

function Taskbar() {
  return (
    <nav aria-label="Taskbar" className="flex h-[30px] shrink-0 items-center bg-[linear-gradient(to_right,#213b43,#203843_45%,#1b2b41_80%,#1a2440)] text-xs text-white">
      <Btn label="Start" className="h-full w-9">
        <Svg w={16} h={16}><path d="M0 2.300l6.500-.900v6.200H0zM7.300 1.300L16 0v7.600H7.300zM0 8.400h6.500v6.200L0 13.700zM7.300 8.400H16V16l-8.700-1.200z" fill="#fff" /></Svg>
      </Btn>
      <Btn label="Search" className="h-full w-9">
        <Svg w={17} h={17}><circle cx="10.500" cy="6" r="5" stroke="#fff" strokeWidth="1.300" /><path d="M7 9.700L1 16" stroke="#fff" strokeWidth="1.300" /></Svg>
      </Btn>
      <Btn label="Cortana" className="h-full w-9">
        <Svg w={16} h={16}><circle cx="8" cy="8" r="6.700" stroke="#fff" strokeWidth="2" /></Svg>
      </Btn>
      <Btn label="Task view" className="mr-[2px] h-full w-9">
        <Svg w={17} h={16}><path d="M.5 1v2.500h10V1M.500 15v-2.500h10V15M.500 5.500h10v5H.500zM14.500 1v14M13 5.500h3" stroke="#fff" strokeWidth="1.200" /></Svg>
      </Btn>
      <Task label="File Explorer" open>
        <Svg w={17} h={15}><path d="M0 1h6l2 2h9v11H0z" fill="#e5a91f" /><path d="M0 4.500h17V14H0z" fill="#fcd462" /><path d="M3 14V8.500h11V14h-3v-2.500H6V14z" fill="#3c9be0" /></Svg>
      </Task>
      <Task label="Microsoft Store">
        <Svg w={16} h={17}><path d="M5 5V1.500h6V5" stroke="#ddd" strokeWidth="1.300" /><path d="M0 5h16v12H0z" fill="#fff" /><path d="M4 7.300h3.500v3.500H4z" fill="#f25022" /><path d="M8.300 7.300h3.500v3.500H8.300z" fill="#7fba00" /><path d="M4 11.600h3.500V15H4z" fill="#00a4ef" /><path d="M8.300 11.600h3.500V15H8.300z" fill="#ffb900" /></Svg>
      </Task>
      <Task label="CCleaner">
        <Svg w={17} h={16}>
          <path d="M14.500 3.500C12 1 7.500 1.200 5.500 4.500S5.500 12.500 9 13.700c2.500.8 4.800 0 6.200-1.700" stroke="#d42c28" strokeWidth="3" />
          <path d="M9 7.500L13.500 1l2 1.300L11.500 9z" fill="#4a8cc4" />
          <path d="M8 7l3.500 2.500C10 12.500 6 14.500 1 13.500 3.500 12 4.500 9 8 7z" fill="#ecd3b4" />
        </Svg>
      </Task>
      <Task label="Firefox">
        <Svg w={17} h={17}><circle cx="8.500" cy="9" r="7.800" fill="#ff7a1a" /><path d="M10 0c5 2 7.500 7 6 11-1-4-3-5-5-5.500C9 4 9 2 10 0z" fill="#ffcb2e" /><path d="M1 7c1 7 6 10 12 7-3 3.500-11 3.500-12.500-3z" fill="#f03a5f" /><circle cx="8.500" cy="9.500" r="3.700" fill="#7b3fd1" /><path d="M3 5c2-1 4 0 5 1.500C6 6 5 8 6 9 4 9 3 7 3 5z" fill="#ff9a2e" /></Svg>
      </Task>
      <Task label="Chrome" open>
        <Svg w={15} h={15}><circle cx="7.500" cy="7.500" r="7.500" fill="#fbc116" /><path d="M7.500 7.500L1 3.700A7.500 7.500 0 0114 3.700z" fill="#e33b2e" /><path d="M1 3.700A7.500 7.500 0 007 15l3.500-6z" fill="#2fa14f" /><circle cx="7.500" cy="7.500" r="3.500" fill="#fff" /><circle cx="7.500" cy="7.500" r="2.700" fill="#4285f4" /></Svg>
      </Task>
      <Task label="Jupyter">
        <Svg w={12} h={14}><path d="M1.500 4.500C4 1.800 8 1.800 10.500 4.500M1.500 9.500c2.500 2.700 6.500 2.700 9 0" stroke="#f37726" strokeWidth="1.500" /><circle cx="1" cy="1" r=".8" fill="#999" /><circle cx="11" cy="1" r=".8" fill="#999" /><circle cx="1.500" cy="13" r=".8" fill="#999" /></Svg>
      </Task>
      <Task label="Command Prompt">
        <Svg w={16} h={12}><path d="M.5.500h15v11H.500z" fill="#222" stroke="#777" /><path d="M1 1.500h14" stroke="#aaa" /><path d="M2.500 4.500h2M5.500 4.500h2" stroke="#888" /></Svg>
      </Task>
      <Task label="Tableau">
        <Svg w={15} h={15}><path d="M0 0h15v15H0z" fill="#fff" /><path d="M7.500 5v5M5 7.500h5M7.500 1v2.500M7.500 11.500V14M1 7.500h2.500M11.500 7.500H14M4.500 3v3M3 4.500h3M10.500 3v3M9 4.500h3M4.500 9v3M3 10.500h3M10.500 9v3M9 10.500h3" stroke="#2f7fa8" /></Svg>
      </Task>
      <Task label="Analytics"><ArcsIcon /></Task>
      <Task label="Analytics dashboard" open><ArcsIcon /></Task>
      <Task label="Excel" open active>
        <Svg w={16} h={17}><path d="M3 0h13v16H3z" fill="#21a366" /><path d="M9 0h7v5H9z" fill="#33c481" /><path d="M9 8.500h7V16H3v-4h6z" fill="#107c41" /><path d="M0 4h9.500v9H0z" fill="#0c6b37" /><path d="M2.800 6l4 5M6.800 6l-4 5" stroke="#fff" strokeWidth="1.300" /></Svg>
      </Task>
      <div className="ml-auto flex h-full items-center">
        <Btn label="Show hidden icons" className="w-6"><Svg w={12} h={7}><path d="M1 6l5-5 5 5" stroke="#fff" strokeWidth="1.200" /></Svg></Btn>
        <Btn label="Battery" className="w-6"><Svg w={16} h={12}><path d="M5.500 3.500h8v7h-8z" stroke="#fff" strokeWidth="1.200" /><path d="M7 5h5v4H7zM14.500 5.500H16v3h-1.500z" fill="#fff" /><path d="M.5 2.500h5v3L3 7 .500 5.500zM1.500 0v2M4.500 0v2M3 7v4h2" stroke="#fff" /></Svg></Btn>
        <Btn label="OneDrive" className="w-6"><Svg w={17} h={11}><path d="M4 11a3.500 3.500 0 010-7 5 5 0 019-.5A3.800 3.800 0 0113 11z" fill="#d5d8db" /><path d="M3 11l8-5.500c3 0 5 1 5.500 3A2.500 2.500 0 0114 11z" fill="#fff" /></Svg></Btn>
        <Btn label="Updates" className="w-[26px]"><Svg w={17} h={16}><path d="M10 13.500H1.500v-11l13-2V7" stroke="#fff" strokeWidth="1.300" /><path d="M5 7c1-2 4-2 5 0V4.500M10.500 8.500c-1 2-4 2-5 0V11" stroke="#fff" /><circle cx="12.500" cy="12" r="3.500" fill="#ff8c00" /></Svg></Btn>
        <Btn label="Language" className="w-8">ENG</Btn>
        <time className="w-[44px] text-center">19:50</time>
        <Btn label="Notifications" className="ml-[9px] w-4"><Svg w={16} h={16}><path d="M.6 1.600h14.800v11H10.500L8 15.300l-2.500-2.700H.600z" stroke="#fff" strokeWidth="1.200" /></Svg></Btn>
        <span className="mr-[7px] ml-[17px] h-full w-px bg-[#5a6678]" />
      </div>
    </nav>
  );
}

export default function App() {
  return (
    <div className={`flex h-screen flex-col overflow-hidden bg-[#f3f2f1] ${UI}`}>
      <TitleBar />
      <MenuBar />
      <Ribbon />
      <div className="flex min-h-0 flex-1 border-t border-[#8d8d8d]">
        <Sheet />
        <VerticalScroll />
      </div>
      <SheetTabs />
      <StatusBar />
      <Taskbar />
      <div className="pointer-events-none fixed right-[57px] bottom-[64px] w-[236px] whitespace-nowrap text-[#9b9b9b] opacity-90">
        <p className="text-[19px] leading-[25px]">Activate Windows</p>
        <p className="text-sm leading-[21px] text-[#b0b0b0]">Go to Settings to activate Windows.</p>
      </div>
    </div>
  );
}
